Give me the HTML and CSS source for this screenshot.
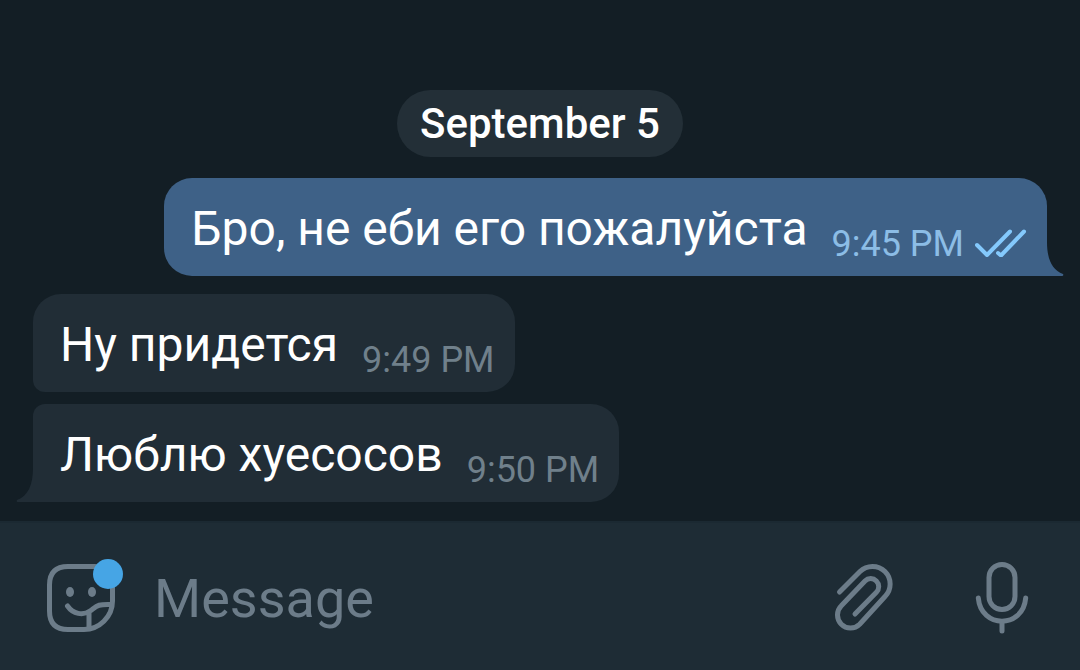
FILE: index.html
```html
<!DOCTYPE html>
<html lang="ru">
<head>
<meta charset="utf-8">
<meta name="viewport" content="width=device-width, initial-scale=1">
<title>Chat</title>
<link rel="stylesheet" href="styles.css">
</head>
<body>
<main class="chat">
  <div class="date">September 5</div>
  <article class="bubble outgoing">
    <p class="text">Бро, не еби его пожалуйста</p>
    <time class="time">9:45 PM</time>
    <svg class="checks" viewBox="0 0 52 28" aria-hidden="true"><path d="M2 16L12 26L35 2.5M23 24l3 2.5L49 2.5"/></svg>
    <svg class="tail tail-right" viewBox="0 0 18 34" aria-hidden="true"><path d="M0 0H1C1 17 6 28 17 32Q18 34 16 34H0z"/></svg>
  </article>
  <article class="bubble incoming first">
    <p class="text">Ну придется</p>
    <time class="time">9:49 PM</time>
  </article>
  <article class="bubble incoming last">
    <p class="text">Люблю хуесосов</p>
    <time class="time">9:50 PM</time>
    <svg class="tail tail-left" viewBox="0 0 18 34" aria-hidden="true"><path d="M18 0H17C17 17 12 28 1 32Q0 34 2 34H18z"/></svg>
  </article>
</main>
<form class="composer">
  <button class="icon-button sticker" type="button" aria-label="Stickers">
    <svg class="icon" viewBox="0 0 80 80" aria-hidden="true">
      <path d="M27 7.500H53Q71.500 7.500 71.500 26V42C71.500 58 58 70.500 43 70.500H27Q8.500 70.500 8.500 52V26Q8.500 7.500 27 7.500z"/>
      <path d="M26.500 47C32 55 42 57 49 52C56 47 56 45 70 45.500M48 53V68"/>
      <ellipse class="eye" cx="29" cy="33" rx="4" ry="5"/><ellipse class="eye" cx="51" cy="33" rx="4" ry="5"/>
    </svg>
    <span class="badge"></span>
  </button>
  <input class="message" type="text" placeholder="Message" aria-label="Message">
  <button class="icon-button" type="button" aria-label="Attach">
    <svg class="icon" viewBox="0 0 80 80" aria-hidden="true"><path d="M17.500 33L38 12.600A17.500 17.500 0 0 1 63 37.500L37.700 65.200A13 13 0 0 1 19.300 46.800L43 22A8 8 0 0 1 54.400 33.300L33 55"/></svg>
  </button>
  <button class="icon-button" type="button" aria-label="Record voice message">
    <svg class="icon" viewBox="0 0 80 80" aria-hidden="true"><rect x="27" y="5.500" width="26" height="45" rx="13"/><path d="M16.300 39C19 70 61 70 63.700 39M40 63V72"/></svg>
  </button>
</form>
</body>
</html>
```
FILE: styles.css
```css
* { box-sizing: border-box; }
body {
  margin: 0;
  min-height: 100vh;
  display: flex;
  flex-direction: column;
  background: #131e25;
  color: #fff;
  font-family: Roboto, "Noto Sans", sans-serif;
}
.chat {
  flex: 1;
  display: flex;
  flex-direction: column;
  justify-content: flex-end;
  align-items: flex-start;
  padding: 20px 33px 19px;
}
.date {
  align-self: center;
  margin-bottom: 21px;
  padding: 9px 23px 8px;
  border-radius: 34px;
  background: #232f37;
  font-size: 42px;
  line-height: 50px;
  font-weight: 500;
}
.bubble {
  position: relative;
  display: flex;
  align-items: flex-end;
  padding: 21px 20px 11px 27px;
  border-radius: 28px;
}
.outgoing {
  align-self: flex-end;
  margin-bottom: 18px;
  border-bottom-right-radius: 0;
  background: #3e6187;
}
.incoming { background: #212d36; }
.first {
  margin-bottom: 12px;
  border-bottom-left-radius: 12px;
}
.last { border-radius: 12px 28px 28px 0; }
.text {
  margin: 0 24px 6px 0;
  font-size: 48px;
  line-height: 60px;
}
.time {
  font-size: 36px;
  line-height: 42px;
  color: #70808b;
}
.outgoing .time { color: #8cbde6; }
.checks {
  width: 52px;
  height: 28px;
  margin: 0 0 8px 11px;
  fill: none;
  stroke: #84c9fc;
  stroke-width: 4;
  stroke-linecap: round;
  stroke-linejoin: round;
}
.tail {
  position: absolute;
  bottom: 0;
  width: 18px;
  height: 34px;
}
.tail-right { left: calc(100% - 1px); fill: #3e6187; }
.tail-left { right: calc(100% - 1px); fill: #212d36; }
.composer {
  display: flex;
  align-items: center;
  padding: 36px 38px 31px 41px;
  border-top: 2px solid #1b2932;
  background: #1e2c35;
}
.icon-button {
  position: relative;
  flex: none;
  width: 80px;
  height: 80px;
  padding: 0;
  border: 0;
  background: none;
}
.icon {
  display: block;
  width: 80px;
  height: 80px;
  fill: none;
  stroke: #6c7c89;
  stroke-width: 5;
  stroke-linecap: round;
  stroke-linejoin: round;
}
.icon .eye { fill: #6c7c89; stroke: none; }
.badge {
  position: absolute;
  top: 0;
  right: -2px;
  width: 30px;
  height: 30px;
  border-radius: 50%;
  background: #46a5e5;
}
.message {
  flex: 1;
  min-width: 0;
  padding: 0 0 0 33px;
  border: 0;
  outline: 0;
  background: none;
  color: #fff;
  font-family: inherit;
  font-size: 54px;
  line-height: 64px;
}
.message::placeholder { color: #6c7c89; opacity: 1; }
.icon-button + .icon-button { margin-left: 60px; }
```
